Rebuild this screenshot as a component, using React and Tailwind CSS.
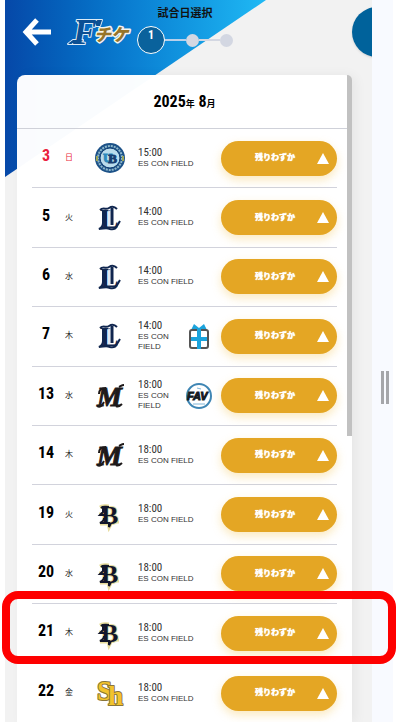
import clsx from "clsx";

const games = [
  { date: 3, day: "日", team: "ub", time: "15:00", holiday: true },
  { date: 5, day: "火", team: "lions", time: "14:00" },
  { date: 6, day: "水", team: "lions", time: "14:00" },
  { date: 7, day: "木", team: "lions", time: "14:00", event: "gift" },
  { date: 13, day: "水", team: "marines", time: "18:00", event: "fav" },
  { date: 14, day: "木", team: "marines", time: "18:00" },
  { date: 19, day: "火", team: "buffaloes", time: "18:00" },
  { date: 20, day: "水", team: "buffaloes", time: "18:00" },
  { date: 21, day: "木", team: "buffaloes", time: "18:00" },
  { date: 22, day: "金", team: "hawks", time: "18:00" },
];

const serif = "'Liberation Serif', serif";
const sans = "'Liberation Sans', sans-serif";

function SiteLogo() {
  return (
    <svg viewBox="0 0 68 34" className="h-[34px] w-[68px] overflow-visible" role="img" aria-label="Fチケ">
      <g strokeLinejoin="round" paintOrder="stroke" fontWeight="700" fontStyle="italic">
        <path d="M2 28l5-4h10l-1 4zM12 4h24l-2 6h-4l-2-3H12z" fill="#0b4f93" stroke="#dcebf7" strokeWidth="2" />
        <text x="7" y="28" fontSize="35" fontFamily={serif} fill="#0b4f93" stroke="#dcebf7" strokeWidth="2">
          F
        </text>
        <path d="M3 27l5-3h8l-1 3zM13 5h22l-2 4h-3l-1-2H13z" fill="#0b4f93" />
        <text
          x="28"
          y="25"
          fontSize="17"
          fontWeight="900"
          fontFamily="'Noto Sans CJK JP', sans-serif"
          fill="#96742a"
          stroke="#f4f4ee"
          strokeWidth="3"
        >
          チケ
        </text>
      </g>
    </svg>
  );
}

function UbLogo() {
  return (
    <>
      <circle cx="16" cy="16" r="15" fill="#1d5288" />
      <circle cx="16" cy="16" r="12" fill="none" stroke="#8fb9cc" strokeWidth="2" strokeDasharray="2 1" />
      <path d="M3 14v5M29 14v5" stroke="#9ba65a" strokeWidth="2" />
      <circle cx="16" cy="16" r="10" fill="#b9dcec" stroke="#123f73" />
      <text
        x="16"
        y="20"
        textAnchor="middle"
        fontSize="13"
        fontFamily={serif}
        fontWeight="700"
        fill="#2d8abd"
        stroke="#2d8abd"
      >
        U
        <tspan dx="-4" dy="1" fill="#173f73" stroke="#173f73">
          B
        </tspan>
      </text>
    </>
  );
}

function LionsLogo() {
  return (
    <>
      <text x="6" y="26" fontSize="28" fontFamily={serif} fontWeight="700" fill="#10264f">
        L
      </text>
      <path d="M18 6v17" stroke="#10264f" strokeWidth="3" />
      <path d="M15 8v16" stroke="#c5cedd" strokeWidth="1" />
      <path
        d="M6 8c3-3 6 0 9-2 3-2 6-1 8 1M9 9v12c0 3-2 5-4 6 4 0 7-2 11 0 4 1 6-1 7-3l3-5"
        fill="none"
        stroke="#10264f"
        strokeWidth="2"
      />
    </>
  );
}

function MarinesLogo() {
  return (
    <>
      <text
        x="3"
        y="26"
        fontSize="28"
        fontFamily={serif}
        fontWeight="700"
        fontStyle="italic"
        fill="#1e1a1a"
        stroke="#1e1a1a"
      >
        M
      </text>
      <path
        d="M5 14c0-4 3-6 7-6M3 26c3 2 5 0 7-4M22 26c2 1 4 0 6-2M25 7c2-1 3-2 5-2"
        fill="none"
        stroke="#1e1a1a"
        strokeWidth="2"
      />
    </>
  );
}

function BuffaloesLogo() {
  return (
    <>
      <path
        d="M6 8c2-2 5-1 9-1M5 15h6M6 25h8l1 4 2-4M20 23h5"
        fill="none"
        stroke="#e7dc9b"
        strokeWidth="3"
      />
      <text
        x="7"
        y="25"
        fontSize="26"
        fontFamily={serif}
        fontWeight="700"
        fill="#12162b"
        stroke="#e7dc9b"
        strokeWidth="2"
        paintOrder="stroke"
      >
        B
      </text>
      <path
        d="M7 9c2-2 4-1 8-1M9 9v4l-3 3h5M10 19c0 2-2 4-4 5h9v4l2-4"
        fill="none"
        stroke="#12162b"
        strokeWidth="2"
      />
    </>
  );
}

function HawksLogo() {
  return (
    <text
      x="3"
      y="23"
      fontSize="27"
      fontFamily={serif}
      fontWeight="700"
      fill="#f2c32d"
      stroke="#8a7638"
      strokeWidth="2"
      paintOrder="stroke"
      strokeLinejoin="round"
    >
      S
      <tspan dx="-4" dy="5">
        h
      </tspan>
    </text>
  );
}

const teams = {
  ub: { label: "UB", Logo: UbLogo },
  lions: { label: "L", Logo: LionsLogo },
  marines: { label: "M", Logo: MarinesLogo },
  buffaloes: { label: "B", Logo: BuffaloesLogo },
  hawks: { label: "Sh", Logo: HawksLogo },
};

function GiftIcon() {
  return (
    <svg viewBox="0 0 28 28" className="size-7 shrink-0" aria-hidden="true">
      <path d="M6 8l3-6 5 4 5-4 3 6z" fill="#1ba3dc" />
      <rect x="5" y="8" width="18" height="18" rx="2" fill="#fff" stroke="#555" strokeWidth="2" />
      <path d="M14 6v21M6 17h16" stroke="#1ba3dc" strokeWidth="4" />
    </svg>
  );
}

function FavIcon() {
  return (
    <svg viewBox="0 0 28 28" className="size-7 shrink-0" role="img" aria-label="FAV">
      <circle cx="14" cy="14" r="12" fill="#fff" stroke="#3f86b4" strokeWidth="2" />
      <path d="M12 6l4 1M8 22h12" stroke="#7fb4d6" />
      <text
        x="2"
        y="18"
        fontSize="11"
        fontFamily={sans}
        fontWeight="700"
        fontStyle="italic"
        fill="#15191f"
        stroke="#15191f"
      >
        FAV
      </text>
    </svg>
  );
}

function Stepper() {
  return (
    <ol className="flex items-center">
      <li className="flex size-7 justify-center rounded-full border border-white bg-[#0a629c] pt-0.5 text-xs leading-3 font-bold text-white">
        1
      </li>
      <li className="h-0.5 w-[21px] bg-[#b9d0ea]" aria-hidden="true" />
      <li className="size-[13px] rounded-full bg-[#d3d7e2]" />
      <li className="h-0.5 w-[21px] bg-[#d3d7e2]" aria-hidden="true" />
      <li className="size-[13px] rounded-full bg-[#d3d7e2]" />
    </ol>
  );
}

function GameRow({ game, last }) {
  const { label, Logo } = teams[game.team];

  return (
    <li className={clsx("flex items-center border-[#d2d3dc]", !last && "border-b")}>
      <span
        className={clsx(
          "w-7 pb-1 text-center text-base leading-5 font-bold",
          game.holiday ? "text-[#ea1f3d]" : "text-black"
        )}
      >
        {game.date}
      </span>
      <span
        className={clsx(
          "w-[18px] text-center text-[8px] leading-3",
          game.holiday ? "text-[#ea1f3d]" : "text-[#222]"
        )}
      >
        {game.day}
      </span>
      <svg viewBox="0 0 32 32" className="ml-4 size-8 shrink-0 overflow-visible" role="img" aria-label={label}>
        <Logo />
      </svg>
      <div className="ml-3 min-w-0 flex-1 pb-px text-[#333]">
        <p className="text-[11px] leading-3">{game.time}</p>
        <p className="font-['Liberation_Sans',sans-serif] text-[8px] leading-[10px] whitespace-nowrap">
          {game.event ? (
            <>
              ES CON
              <br />
              FIELD
            </>
          ) : (
            "ES CON FIELD"
          )}
        </p>
      </div>
      {game.event && (
        <span className="mr-2">{game.event === "gift" ? <GiftIcon /> : <FavIcon />}</span>
      )}
      <button
        type="button"
        className="relative h-[35px] w-[116px] shrink-0 rounded-full bg-[#e4a624] pr-2 text-[8px] leading-3 font-black text-white shadow-[0_4px_10px_#f5c86066] text-shadow-[0_0_1px_#fff]"
      >
        残りわずか
        <svg viewBox="0 0 12 11" className="absolute top-3 right-2 h-[11px] w-3" aria-hidden="true">
          <path d="M6 0l6 11H0z" fill="#fff" />
        </svg>
      </button>
    </li>
  );
}

export default function App() {
  return (
    <div className="relative flex min-h-screen overflow-hidden bg-white pl-[5px] font-['Roboto_Condensed','Liberation_Sans_Narrow','Noto_Sans_CJK_JP',sans-serif]">
      <div className="relative isolate min-w-0 flex-1 overflow-hidden bg-[#f2f2f2]">
        <div className="absolute top-0 left-0 -z-10 h-[177px] w-[261px] bg-linear-to-r from-[#0648a8] via-[#0b80d3] to-[#20b9f4] [clip-path:polygon(0_0,100%_0,0_100%)]" />

        <header className="flex h-[75px] items-start pl-[17px]">
          <button type="button" aria-label="戻る" className="mt-[17px] text-white">
            <svg viewBox="0 0 30 30" className="size-[30px]" fill="none" stroke="currentColor" strokeWidth="5">
              <path d="M29 15H5M15 3L4 15l11 12" />
            </svg>
          </button>
          <div className="mt-4 ml-[14px]">
            <SiteLogo />
          </div>
          <div className="ml-[3px] flex flex-col items-center">
            <h1 className="mt-1.5 mb-1 text-[11px] leading-4 font-bold text-[#111]">試合日選択</h1>
            <Stepper />
          </div>
          <button
            type="button"
            aria-label="メニュー"
            className="absolute top-[7px] -right-[30px] size-[50px] rounded-full bg-[#00629b] shadow-sm"
          />
        </header>

        <main className="relative mr-5 ml-3 rounded-t-lg bg-white/98 shadow-[4px_0_12px_#0000000d]">
          <h2 className="flex h-[54px] items-center justify-center border-b border-[#cfd1d9] text-base font-bold text-black">
            <span>
              2025<small className="text-[9px]">年</small> 8<small className="text-[9px]">月</small>
            </span>
          </h2>
          <div
            className="absolute top-0 right-0 h-[361px] w-[5px] rounded-tr-lg bg-[#c1c1c1]"
            aria-hidden="true"
          />
          <ul className="mr-[15px] ml-[15px] grid min-h-[594px] auto-rows-fr">
            {games.map((game, i) => (
              <GameRow key={game.date} game={game} last={i === games.length - 1} />
            ))}
          </ul>
        </main>
      </div>

      <aside className="mr-[7px] flex w-[21px] justify-center gap-0.5 bg-[#f8faff] pt-[371px] pl-1">
        <span className="h-[33px] w-[3px] bg-[#a5a6aa]" />
        <span className="h-[33px] w-[3px] bg-[#a5a6aa]" />
      </aside>

      {/* highlight frame over the 21st */}
      <div className="pointer-events-none absolute top-[591px] right-1 left-0.5 h-[73px] rounded-2xl border-8 border-[#fe0000]" />
    </div>
  );
}
